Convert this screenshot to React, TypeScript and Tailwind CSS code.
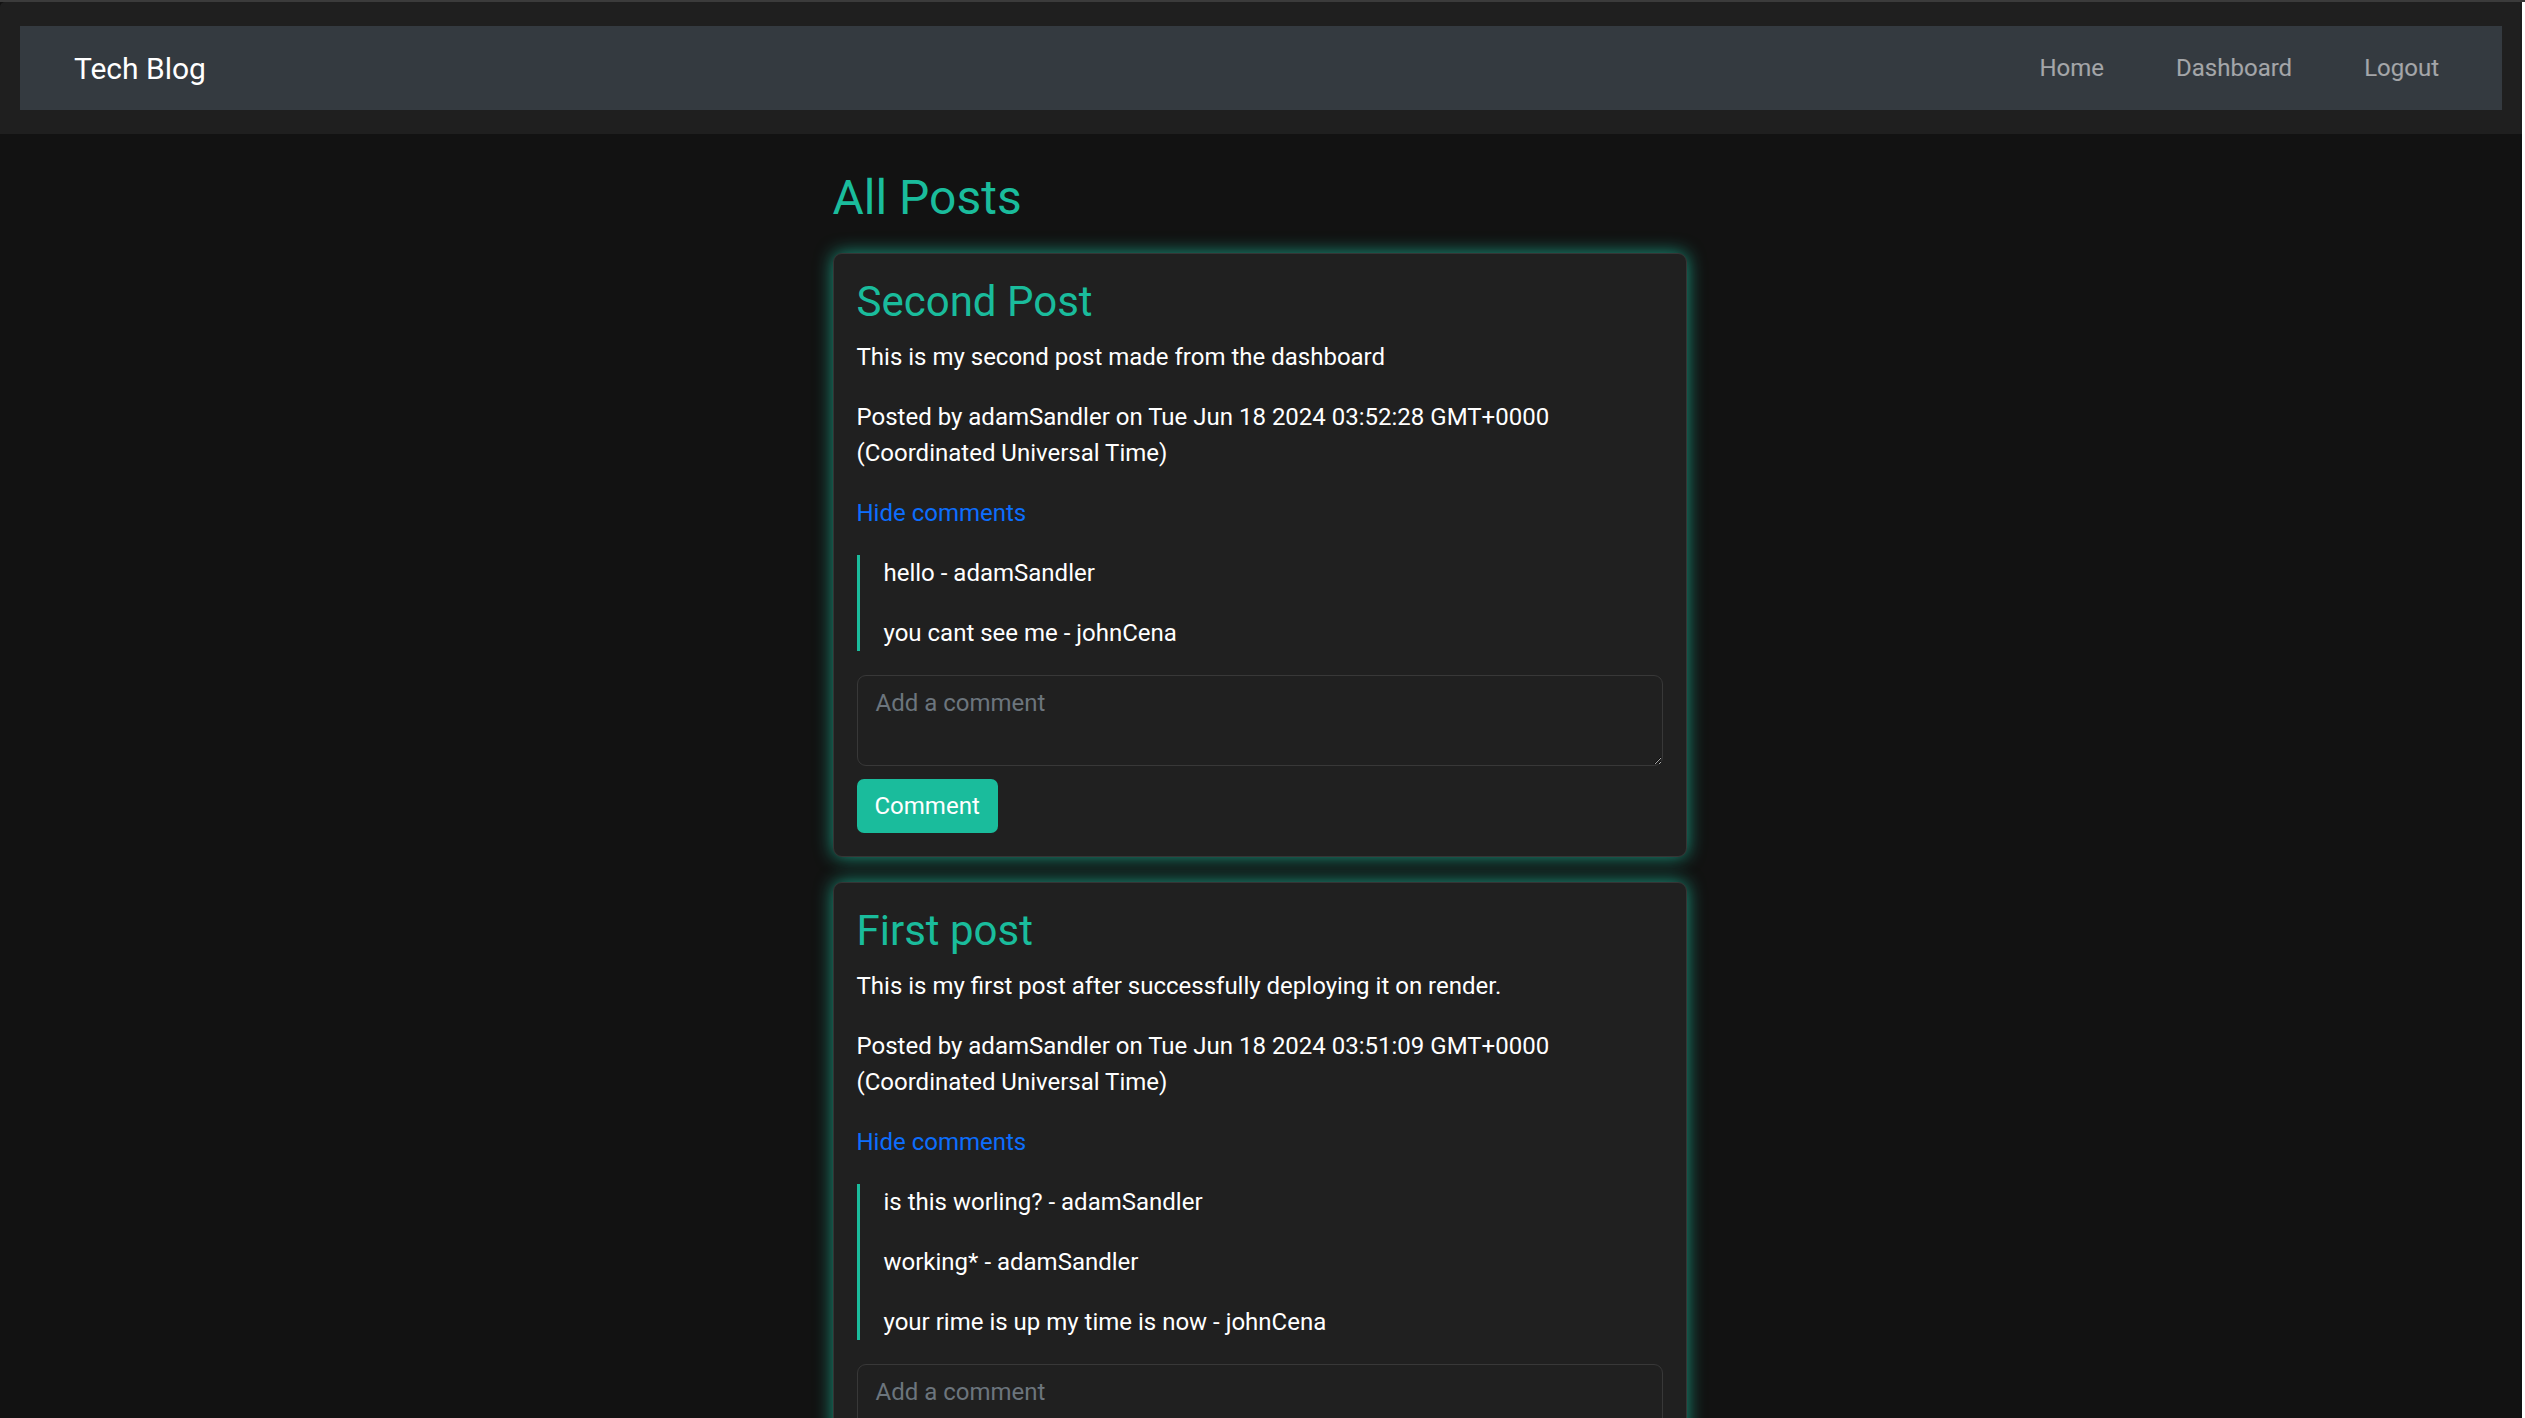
import React from "react";

type Post = {
  title: string;
  body: string;
  date: string;
  comments: string[];
};

const posts: Post[] = [
  {
    title: "Second Post",
    body: "This is my second post made from the dashboard",
    date: "Tue Jun 18 2024 03:52:28 GMT+0000",
    comments: ["hello - adamSandler", "you cant see me - johnCena"],
  },
  {
    title: "First post",
    body: "This is my first post after successfully deploying it on render.",
    date: "Tue Jun 18 2024 03:51:09 GMT+0000",
    comments: [
      "is this worling? - adamSandler",
      "working* - adamSandler",
      "your rime is up my time is now - johnCena",
    ],
  },
];

function PostCard({ post }: { post: Post }) {
  return (
    <div className="mb-[25px] rounded-[9px] border-[1.5px] border-[#353535] bg-[#202020] p-[23px] shadow-[0_0_18px_rgba(26,188,156,0.8)]">
      <h3 className="mb-[12px] text-[42px] font-normal leading-[1.2] text-[#1abc9c]">
        {post.title}
      </h3>
      <p className="mb-[24px] text-white">{post.body}</p>
      <p className="mb-[24px] text-white">
        Posted by adamSandler on {post.date}
        <br />
        (Coordinated Universal Time)
      </p>
      <p className="mb-[24px] text-[#0d6efd]">Hide comments</p>
      <div className="mb-[24px] flex flex-col gap-[24px] border-l-[3px] border-[#1abc9c] pl-[24px]">
        {post.comments.map((c) => (
          <p key={c} className="text-white">
            {c}
          </p>
        ))}
      </div>
      <textarea
        placeholder="Add a comment"
        className="block h-[91px] w-full rounded-[9px] border-[1.5px] border-[#383838] bg-[#202020] px-[18px] py-[9px] text-[24px] leading-[36px] text-white outline-none placeholder:text-[#6c757d]"
      />
      <button className="mt-[13px] h-[54px] rounded-[7px] bg-[#1abc9c] px-[18px] text-[24px] leading-[36px] text-white">
        Comment
      </button>
    </div>
  );
}

export default function App() {
  return (
    <div className="flex min-h-screen flex-col bg-white font-['Roboto',_'Liberation_Sans',_sans-serif] text-[24px] leading-[36px]">
      <div className="h-[2px] w-full bg-[#3b3b3b]" />
      <div className="flex flex-1">
        <div className="w-[2522px] flex-none bg-[#121212]">
          <header className="rounded-tl-[5px] bg-[#1f1f1f] px-[20px] pb-[24px] pt-[24px]">
            <nav className="flex h-[84px] items-center justify-between bg-[#343a40] pl-[54px] pr-[63px]">
              <span className="text-[30px] leading-[45px] text-white">Tech Blog</span>
              <div className="flex items-center gap-[72px] text-white/55">
                <span>Home</span>
                <span>Dashboard</span>
                <span>Logout</span>
              </div>
            </nav>
          </header>
          <main className="mx-auto w-[857px] pr-[3px] pt-[35px]">
            <h2 className="mb-[26px] text-[48px] font-normal leading-[1.2] text-[#1abc9c]">
              All Posts
            </h2>
            {posts.map((p) => (
              <PostCard key={p.title} post={p} />
            ))}
          </main>
        </div>
        <div className="flex-1 bg-white" />
      </div>
    </div>
  );
}
